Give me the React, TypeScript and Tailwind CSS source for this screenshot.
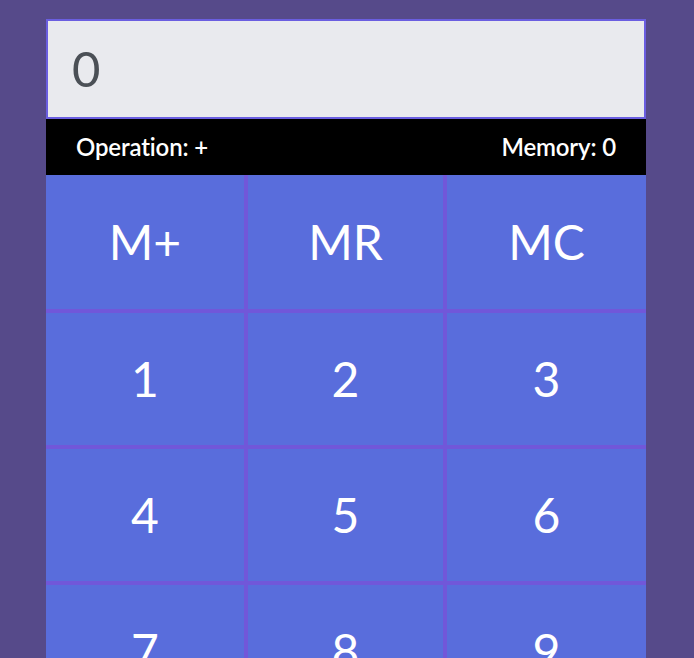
import React from "react";

const rows = [
  ["M+", "MR", "MC"],
  ["1", "2", "3"],
  ["4", "5", "6"],
  ["7", "8", "9"],
  ["0", ".", "="],
];

export default function App() {
  return (
    <div
      className="min-h-[658px] w-full bg-[#564a8a] pt-[19px]"
      style={{ fontFamily: "Lato, 'Open Sans', sans-serif" }}
    >
      <div className="ml-[46px] w-[600px]">
        <div className="flex h-[100px] items-center border-2 border-[#6a5ee0] bg-[#e9eaee] pl-[24px] text-[49px] text-[#4b5056]">
          0
        </div>
        <div className="flex h-[56px] items-center justify-between bg-black px-[30px] text-[24px] font-semibold tracking-[-0.15px] text-white">
          <span>Operation: +</span>
          <span>Memory: 0</span>
        </div>
        <div className="grid gap-[4px] bg-[#7157d9] [grid-template-columns:198px_195px_199px] [grid-template-rows:134px_132px_132px_132px_132px]">
          {rows.flat().map((k, i) => (
            <button
              key={i}
              className="flex items-center justify-center bg-[#596ddc] text-[48px] text-white"
            >
              {k}
            </button>
          ))}
        </div>
      </div>
    </div>
  );
}
